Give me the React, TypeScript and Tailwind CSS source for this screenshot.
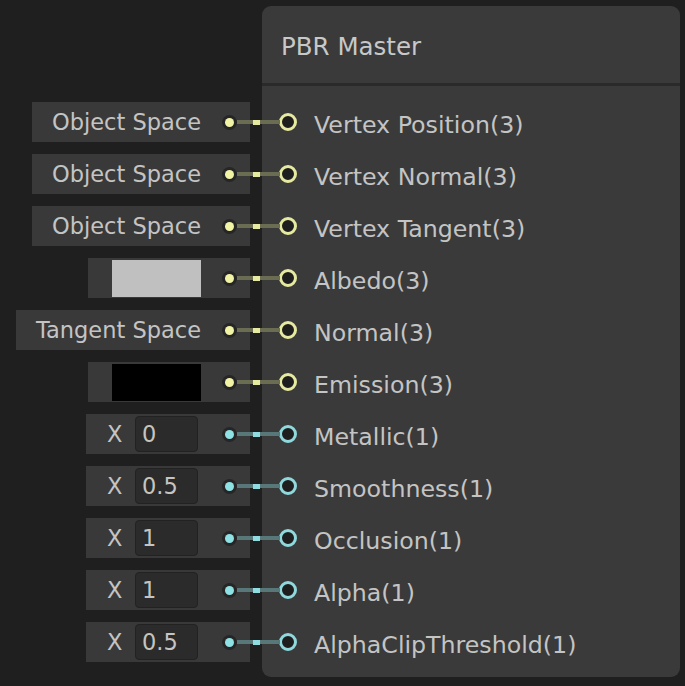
type Kind = "yellow" | "cyan";

interface Slot {
  label: string;
  kind: Kind;
  input: "space" | "color" | "float";
  value: string;
}

const slots: Slot[] = [
  { label: "Vertex Position(3)", kind: "yellow", input: "space", value: "Object Space" },
  { label: "Vertex Normal(3)", kind: "yellow", input: "space", value: "Object Space" },
  { label: "Vertex Tangent(3)", kind: "yellow", input: "space", value: "Object Space" },
  { label: "Albedo(3)", kind: "yellow", input: "color", value: "#c0c0c0" },
  { label: "Normal(3)", kind: "yellow", input: "space", value: "Tangent Space" },
  { label: "Emission(3)", kind: "yellow", input: "color", value: "#000000" },
  { label: "Metallic(1)", kind: "cyan", input: "float", value: "0" },
  { label: "Smoothness(1)", kind: "cyan", input: "float", value: "0.5" },
  { label: "Occlusion(1)", kind: "cyan", input: "float", value: "1" },
  { label: "Alpha(1)", kind: "cyan", input: "float", value: "1" },
  { label: "AlphaClipThreshold(1)", kind: "cyan", input: "float", value: "0.5" },
];

const font = { fontFamily: '"DejaVu Sans", "Liberation Sans", sans-serif' };

// little socket dot on the right side of an input box, plus the wire to the port
const Dot = ({ kind, gap }: { kind: Kind; gap: string }) => (
  <div className={`relative ${gap} mr-[13px] w-[15px] h-[15px] rounded-full bg-[#262626] flex items-center justify-center`}>
    <div className={`w-[9px] h-[9px] rounded-full ${kind === "yellow" ? "bg-[#f1f3a5]" : "bg-[#8fe2e4]"}`} />
    <div
      className={`absolute left-[15px] top-[5.5px] w-[43px] h-[4px] z-10 ${
        kind === "yellow" ? "bg-[#6a6d52]" : "bg-[#577779]"
      }`}
    >
      <div
        className={`absolute left-[16px] top-[-0.5px] w-[7px] h-[5px] ${
          kind === "yellow" ? "bg-[#e6e9a0]" : "bg-[#8fdde0]"
        }`}
      />
    </div>
  </div>
);

const InputBox = ({ slot }: { slot: Slot }) => {
  if (slot.input === "space") {
    return (
      <div className="h-[40px] bg-[#393939] flex items-center pl-5">
        <span className="text-[22.5px] text-[#c4c4c4] leading-none">{slot.value}</span>
        <Dot kind={slot.kind} gap="ml-[21px]" />
      </div>
    );
  }
  if (slot.input === "color") {
    return (
      <div className="h-[40px] bg-[#393939] flex items-center pl-6">
        <div className="w-[89px] h-[37px]" style={{ backgroundColor: slot.value }} />
        <Dot kind={slot.kind} gap="ml-[21px]" />
      </div>
    );
  }
  return (
    <div className="h-[40px] bg-[#393939] flex items-center pl-[21px]">
      <span className="w-[28px] text-[22.5px] text-[#c4c4c4] leading-none">X</span>
      <div className="w-[63px] h-[36px] rounded-[4px] bg-[#2b2b2b] border border-[#222222] flex items-center pl-[6px]">
        <span className="text-[22.5px] text-[#c4c4c4] leading-none">{slot.value}</span>
      </div>
      <Dot kind={slot.kind} gap="ml-[24px]" />
    </div>
  );
};

const App = () => {
  return (
    <div className="w-[685px] h-[686px] bg-[#1f1f1f] flex pt-[6px] overflow-hidden" style={font}>
      {/* inputs column */}
      <div className="w-[250px] flex flex-col items-end pt-[90px]">
        {slots.map((s) => (
          <div key={s.label} className="h-[52px] flex items-center">
            <InputBox slot={s} />
          </div>
        ))}
      </div>

      {/* master node */}
      <div className="ml-[12px] w-[418px] h-[671px] rounded-[9px] bg-[#3a3a3a] flex flex-col">
        <div className="h-[80px] flex items-center pl-[19px] pt-[5px] border-b-[3px] border-[#2a2a2a]">
          <p className="text-[24.5px] text-[#c8c8c8]">PBR Master</p>
        </div>
        <div className="flex flex-col pt-[10px]">
          {slots.map((s) => (
            <div key={s.label} className="h-[52px] flex items-center pl-[17px]">
              <div
                className={`w-[18px] h-[18px] rounded-full border-[3px] bg-[#1e1e1e] ${
                  s.kind === "yellow" ? "border-[#e6e9a0]" : "border-[#8fd8dc]"
                }`}
              />
              <span className="ml-[17px] text-[23.7px] text-[#c4c4c4] leading-none pt-[7px]">{s.label}</span>
            </div>
          ))}
        </div>
      </div>
    </div>
  );
};

export default App;
